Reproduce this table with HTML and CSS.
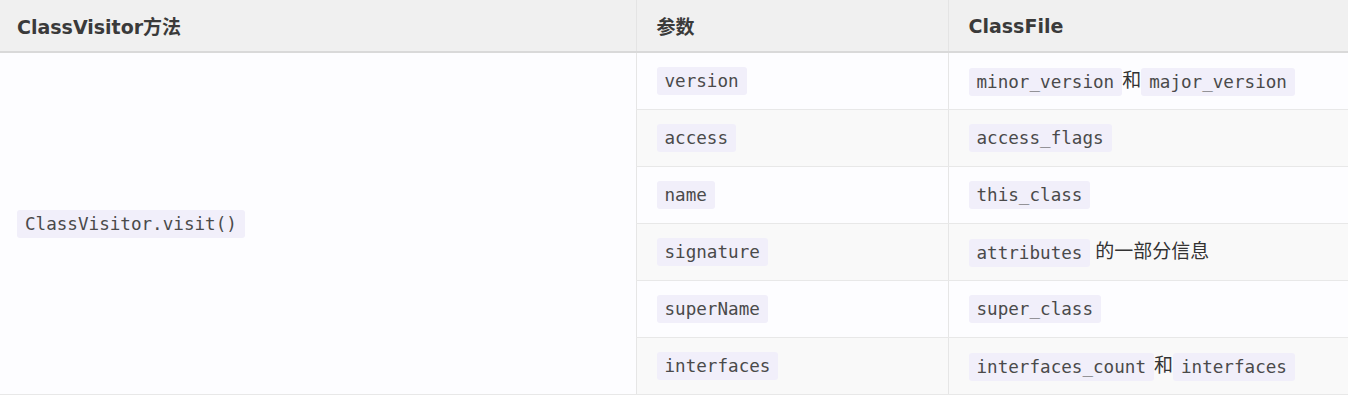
FILE: index.html
```html
<!DOCTYPE html>
<html lang="zh">
<head>
<meta charset="utf-8">
<title>ClassVisitor</title>
<link rel="stylesheet" href="styles.css">
</head>
<body>
<table class="tbl">
  <colgroup>
    <col class="c1"><col class="c2"><col class="c3">
  </colgroup>
  <thead>
    <tr><th>ClassVisitor方法</th><th>参数</th><th>ClassFile</th></tr>
  </thead>
  <tbody>
    <tr class="odd">
      <td rowspan="6" class="method"><code>ClassVisitor.visit()</code></td>
      <td><code>version</code></td>
      <td><code>minor_version</code>和<code>major_version</code></td>
    </tr>
    <tr class="even">
      <td><code>access</code></td>
      <td><code>access_flags</code></td>
    </tr>
    <tr class="odd">
      <td><code>name</code></td>
      <td><code>this_class</code></td>
    </tr>
    <tr class="even">
      <td><code>signature</code></td>
      <td><code>attributes</code> 的一部分信息</td>
    </tr>
    <tr class="odd">
      <td><code>superName</code></td>
      <td><code>super_class</code></td>
    </tr>
    <tr class="even">
      <td><code>interfaces</code></td>
      <td><code>interfaces_count</code>和<code>interfaces</code></td>
    </tr>
  </tbody>
</table>
</body>
</html>
```
FILE: styles.css
```css
html, body {
  margin: 0;
  padding: 0;
  background: #ffffff;
}
body {
  font-family: "Open Sans", "Noto Sans CJK SC", sans-serif;
  color: #333333;
  overflow: hidden;
}
.tbl {
  border-collapse: collapse;
  width: calc(100% + 6px);
  margin-left: -3px;
  table-layout: fixed;
}
.c1 { width: 639px; }
.c2 { width: 312px; }
.tbl th {
  background: #f0f0f0;
  text-align: left;
  font-family: "DejaVu Sans", "Noto Sans CJK SC", sans-serif;
  font-weight: 700;
  font-size: 19px;
  color: #3a3a3a;
  height: 52px;
  padding: 0 20px;
  box-sizing: border-box;
  border-bottom: 2px solid #d9d9d9;
  border-left: 1px solid #e4e4e4;
  vertical-align: middle;
}
.tbl th:first-child { border-left: none; }
.tbl td {
  padding: 0 20px;
  height: 57px;
  box-sizing: border-box;
  font-size: 19px;
  color: #333333;
  border-bottom: 1px solid #e8e8e8;
  border-left: 1px solid #e6e6e6;
  vertical-align: middle;
  white-space: nowrap;
}
.tbl td.method { border-left: none; background: #fdfdff; }
.odd td { background: #fdfdff; }
.even td { background: #f9f9f9; }
code {
  display: inline-block;
  vertical-align: middle;
  font-family: "DejaVu Sans Mono", monospace;
  font-size: 17.6px;
  line-height: 28px;
  padding: 0 8px;
  background: #f1effa;
  color: #4a4a4a;
  border-radius: 3px;
}
```
